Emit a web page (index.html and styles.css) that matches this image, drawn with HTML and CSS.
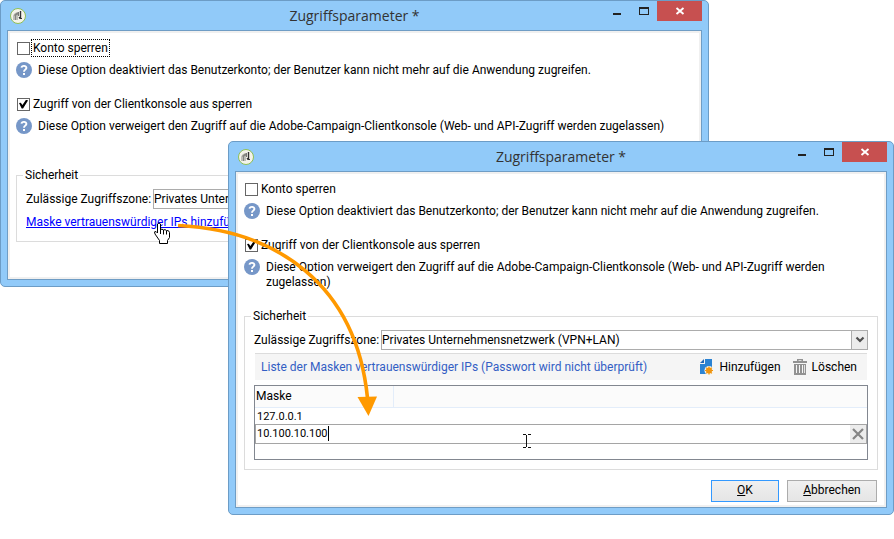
FILE: index.html
```html
<!DOCTYPE html>
<html lang="de">
<head>
<meta charset="utf-8">
<title>Zugriffsparameter</title>
<link rel="stylesheet" href="styles.css">
</head>
<body>
<svg class="symbols" aria-hidden="true">
  <symbol id="app" viewBox="0 0 16 16">
    <circle cx="8" cy="8" r="7.5" fill="#f4f3ea" stroke="#8fbf55"/>
    <path d="M3 12V7.500l2-2.500 3-1v8z" fill="#bdbdb7"/>
    <path d="M4 7l3-2.500h1v2l-2 1v4.500H5V8z" fill="#85857f"/>
    <path d="M10.500 3v7" fill="none" stroke="#333" stroke-width="1.400"/>
    <path d="M8.500 9h1.500v1h2v1H9.500z" fill="#333"/>
    <path d="M8.500 4v4" stroke="#777"/>
  </symbol>
  <symbol id="help" viewBox="0 0 16 16">
    <circle cx="8" cy="8" r="8" fill="#7697c8"/>
    <path d="M5.500 5.600C5.800 3.300 10.500 3.300 10.400 5.900C10.300 7.600 8 7.700 8 9.700" fill="none" stroke="#fff" stroke-width="1.900"/>
    <path d="M7 11h2v2H7z" fill="#fff"/>
  </symbol>
  <symbol id="min" viewBox="0 0 10 10"><path d="M1 7h8v2H1z" fill="#222"/></symbol>
  <symbol id="max" viewBox="0 0 10 10"><path fill-rule="evenodd" d="M0 1h10v8H0zM1 3v5h8V3z" fill="#222"/></symbol>
  <symbol id="close" viewBox="0 0 10 10"><path d="M1.500 2l7 6M8.500 2l-7 6" stroke="#fff" stroke-width="1.900"/></symbol>
  <symbol id="chevron" viewBox="0 0 10 10"><path d="M1.500 2.500L5 6l3.500-3.500" fill="none" stroke="#505050" stroke-width="2.200"/></symbol>
</svg>

<main class="desktop">
  <section class="window window-back" aria-label="Zugriffsparameter">
    <header class="titlebar">
      <svg class="icon"><use href="#app"/></svg>
      <h1>Zugriffsparameter *</h1>
      <div class="controls">
        <button type="button" aria-label="Minimieren"><svg><use href="#min"/></svg></button>
        <button type="button" aria-label="Maximieren"><svg><use href="#max"/></svg></button>
        <button type="button" class="close" aria-label="Schließen"><svg><use href="#close"/></svg></button>
      </div>
    </header>
    <div class="content">
      <div class="check"><input type="checkbox" id="lock-a"><label for="lock-a" class="focused">Konto sperren</label></div>
      <div class="hint"><svg class="icon"><use href="#help"/></svg><p>Diese Option deaktiviert das Benutzerkonto; der Benutzer kann nicht mehr auf die Anwendung zugreifen.</p></div>
      <div class="check"><input type="checkbox" id="console-a" checked><label for="console-a">Zugriff von der Clientkonsole aus sperren</label></div>
      <div class="hint hint-tall"><svg class="icon"><use href="#help"/></svg><p>Diese Option verweigert den Zugriff auf die Adobe-Campaign-Clientkonsole (Web- und API-Zugriff werden zugelassen)</p></div>
      <fieldset>
        <legend>Sicherheit</legend>
        <div class="field">
          <label for="zone-a">Zulässige Zugriffszone:</label>
          <div class="combo"><select id="zone-a"><option>Privates Unternehmensnetzwerk (VPN+LAN)</option></select><span><svg><use href="#chevron"/></svg></span></div>
        </div>
        <a class="mask-link" href="#masks">Maske vertrauenswürdiger IPs hinzufügen</a>
      </fieldset>
    </div>
  </section>

  <section class="window window-front" aria-label="Zugriffsparameter">
    <header class="titlebar">
      <svg class="icon"><use href="#app"/></svg>
      <h1>Zugriffsparameter *</h1>
      <div class="controls">
        <button type="button" aria-label="Minimieren"><svg><use href="#min"/></svg></button>
        <button type="button" aria-label="Maximieren"><svg><use href="#max"/></svg></button>
        <button type="button" class="close" aria-label="Schließen"><svg><use href="#close"/></svg></button>
      </div>
    </header>
    <div class="content">
      <div class="check"><input type="checkbox" id="lock-b"><label for="lock-b">Konto sperren</label></div>
      <div class="hint"><svg class="icon"><use href="#help"/></svg><p>Diese Option deaktiviert das Benutzerkonto; der Benutzer kann nicht mehr auf die Anwendung zugreifen.</p></div>
      <div class="check"><input type="checkbox" id="console-b" checked><label for="console-b">Zugriff von der Clientkonsole aus sperren</label></div>
      <div class="hint hint-tall"><svg class="icon"><use href="#help"/></svg><p>Diese Option verweigert den Zugriff auf die Adobe-Campaign-Clientkonsole (Web- und API-Zugriff werden zugelassen)</p></div>
      <fieldset id="masks">
        <legend>Sicherheit</legend>
        <div class="field">
          <label for="zone-b">Zulässige Zugriffszone:</label>
          <div class="combo"><select id="zone-b"><option>Privates Unternehmensnetzwerk (VPN+LAN)</option></select><span><svg><use href="#chevron"/></svg></span></div>
        </div>
        <div class="toolbar">
          <h2>Liste der Masken vertrauenswürdiger IPs (Passwort wird nicht überprüft)</h2>
          <button type="button">
            <svg viewBox="0 0 14 16"><path d="M5 0h7v8H8l-2 3v4H0V5h5z" fill="#2b83d3"/><path d="M0 4l4-4v4z" fill="#2468b4"/><circle cx="9" cy="11.500" r="4.500" fill="#f7f3e8"/><circle cx="9" cy="11.500" r="3" fill="#ef9410"/><path d="M9 7.500v8M5 11.500h8M6.200 8.700l5.600 5.600M11.800 8.700l-5.600 5.600" stroke="#ef9410" stroke-width="1.200"/></svg>
            Hinzufügen
          </button>
          <button type="button">
            <svg viewBox="0 0 14 16"><path d="M0 2h4V0h6v2h4v2H0zM5.500 1.200V2h3v-.8z" fill="#929292" fill-rule="evenodd"/><path d="M1 5h12v11H1zM3 6v8h1V6zm3 0v8h1V6zm3 0v8h1V6zm2.200 0v8h.8V6z" fill="#929292" fill-rule="evenodd"/></svg>
            Löschen
          </button>
        </div>
        <div class="grid">
          <table>
            <thead><tr><th scope="col">Maske</th><td></td></tr></thead>
            <tbody>
              <tr><td colspan="2">127.0.0.1</td></tr>
              <tr><td colspan="2" class="editing"><div class="editor"><input type="text" value="10.100.10.100" aria-label="Maske"><i class="caret"></i><button type="button" aria-label="Leeren"><svg viewBox="0 0 12 12"><path d="M1 1l10 10M11 1L1 11" stroke="#858585" stroke-width="2.200"/></svg></button></div></td></tr>
            </tbody>
          </table>
        </div>
      </fieldset>
      <footer class="actions">
        <button type="button" class="default"><u>O</u>K</button>
        <button type="button"><u>A</u>bbrechen</button>
      </footer>
    </div>
  </section>

  <svg class="overlay" viewBox="0 0 894 539" aria-hidden="true">
    <path d="M178 225.500C275 230 356 283 367.500 398" fill="none" stroke="#ff9900" stroke-width="3.600"/>
    <path d="M357.500 397L377 396.500L368.500 416z" fill="#ff9900"/>
    <path d="M157.500 224q1.500-2 3 0v5.500q1.500-1 3 .5q1.500-1 3 .5q2.500-.5 3 2v5l-2 3v3h-8v-3l-4.500-6.500q-1.500-3 1-2.500l1.500 1.500z" fill="#fff" stroke="#000"/>
    <path d="M160.500 229v5M163.500 230v4.500M166.500 231v3.500" stroke="#000" fill="none"/>
    <path d="M523 434.500h3M528 434.500h3M526.500 435v12M523 447.500h3M528 447.500h3" stroke="#111" fill="none"/>
  </svg>
</main>
</body>
</html>
```

FILE: styles.css
```css
* { box-sizing: border-box; }

body {
  margin: 0;
  background: #fff;
  color: #000;
  font: 12px/15px Roboto, "Open Sans", sans-serif;
}

h1, h2, p { margin: 0; font-weight: normal; }
button, input, select { font: inherit; color: inherit; margin: 0; }
svg { display: block; flex: none; }
.symbols { position: absolute; width: 0; height: 0; }
.icon { width: 16px; height: 16px; }

.desktop { position: relative; min-height: 539px; overflow: hidden; }

.window {
  position: absolute;
  padding: 0 6px 6px;
  border: 1px solid #6c9cc6;
  border-radius: 5px;
  background: #91caf9;
}
.window-back { top: 0; left: 0; right: 185px; }
.window-front { top: 141px; left: 228px; right: 0; }

.titlebar {
  display: grid;
  grid-template-columns: 100px 1fr 100px;
  align-items: center;
  height: 29px;
}
.titlebar .icon { margin-left: 3px; }
.titlebar h1 { font: 14px/20px "Open Sans", sans-serif; text-align: center; color: #333; }
.controls { display: flex; align-self: start; justify-content: flex-end; }
.controls button {
  display: grid;
  place-items: center;
  width: 27px;
  height: 20px;
  padding: 0;
  border: 0;
  background: none;
}
.controls .close { width: 45px; background: #c75050; }
.controls svg { width: 10px; height: 10px; }

.content {
  border: 1px solid #6f9dc5;
  box-shadow: inset 0 0 0 2px #f0f0f0;
  background: #fff;
  padding: 9px 8px 5px;
}
.window-back .content { padding-bottom: 37px; }

.check { display: flex; align-items: center; height: 16px; gap: 2px; }
.check input {
  appearance: none;
  width: 13px;
  height: 13px;
  margin-left: 1px;
  border: 1px solid #666;
  background: #fff;
}
.check input:checked::after {
  content: "";
  display: block;
  width: 9px;
  height: 9px;
  margin: 1px;
  background: #000;
  clip-path: polygon(0 40%, 20% 35%, 38% 60%, 80% 0, 100% 10%, 45% 100%, 30% 100%);
}
.check label { padding: 1px 1px 0; }
.check .focused { outline: 1px dotted #000; }

.hint { display: flex; gap: 6px; min-height: 16px; margin: 6px 0 18px; }
.hint p { padding-top: 1px; }
.hint-tall { min-height: 32px; margin-bottom: 17px; }

fieldset { margin: 0; padding: 6px 9px 9px; border: 1px solid #dcdcdc; min-width: 0; }
legend { padding: 0 2px; margin-left: -3px; line-height: 16px; }
.window-back fieldset { padding-bottom: 11px; }

.field { display: flex; align-items: center; white-space: nowrap; }
.field label { flex: 0 0 127px; }
.combo { position: relative; flex: 1; }
.combo select {
  appearance: none;
  display: block;
  width: 100%;
  height: 20px;
  padding: 0 20px 0 0;
  border: 1px solid #acacac;
  border-radius: 0;
  background: #fff;
}
.combo span {
  position: absolute;
  top: 0;
  right: 0;
  display: grid;
  place-items: center;
  width: 17px;
  height: 20px;
  border: 1px solid #acacac;
  background: #ececec;
  pointer-events: none;
}
.combo svg { width: 10px; height: 10px; }
.mask-link { display: block; margin-top: 5px; line-height: 16px; color: #00f; }

.toolbar {
  display: flex;
  align-items: center;
  gap: 12px;
  height: 27px;
  margin: 3px 1px 5px;
  padding: 0 10px 0 6px;
  border-top: 1px solid #dcdcdc;
  background: #f5f5f5;
}
.toolbar h2 { flex: 1; font-size: 12px; color: #335ec4; }
.toolbar button { display: flex; align-items: center; gap: 5px; padding: 0; border: 0; background: none; }
.toolbar svg { width: 14px; height: 16px; }

.grid { padding-bottom: 15px; border: 1px solid #828790; }
table { width: 100%; border-collapse: collapse; table-layout: fixed; }
tbody { font-size: 11px; }
th, td { padding: 0 2px; text-align: left; font-weight: normal; height: 16px; }
thead th, thead td { height: 21px; padding: 0; background: #fbfbfb; border-bottom: 1px solid #e3edfa; }
th { width: 138px; }
thead th { padding: 1px 0 0 1px; border-right: 1px solid #e3edfa; }
tbody td { padding-top: 1px; }
.grid .editing { padding: 0; }
.editor { display: flex; align-items: center; height: 20px; border: 1px solid #a5a5a5; }
.editor input { field-sizing: content; height: 16px; padding: 0 0 0 1px; border: 0; background: none; outline: 0; }
.caret { width: 1px; height: 15px; background: #000; }
.editor button {
  display: grid;
  place-items: center;
  width: 16px;
  height: 18px;
  margin-left: auto;
  padding: 0;
  border: 0;
  background: #ececec;
}
.editor svg { width: 12px; height: 12px; }

.actions { display: flex; justify-content: flex-end; gap: 8px; padding: 10px 1px 0 0; }
.actions button {
  width: 90px;
  height: 22px;
  padding: 0;
  border: 1px solid #acacac;
  background: linear-gradient(#f0f0f0, #e5e5e5);
}
.actions .default { width: 68px; border-color: #3399ff; }

.overlay { position: absolute; top: 0; left: 0; width: 894px; height: 539px; pointer-events: none; }
```
